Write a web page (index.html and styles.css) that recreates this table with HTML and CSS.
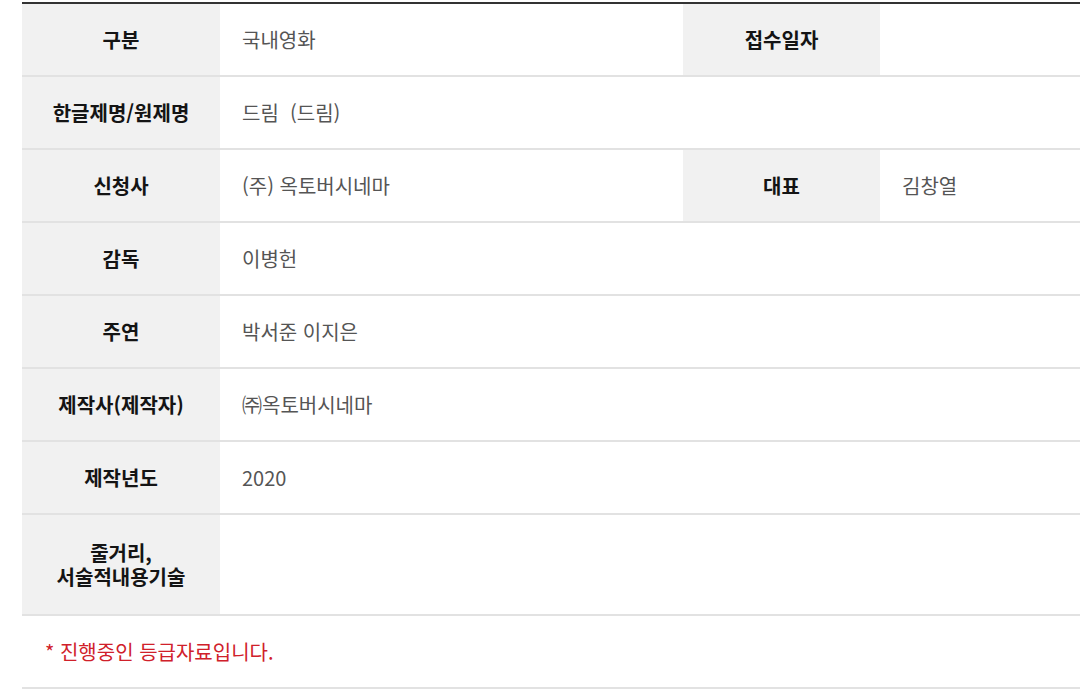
FILE: index.html
```html
<!DOCTYPE html>
<html lang="ko">
<head>
<meta charset="utf-8">
<link rel="stylesheet" href="styles.css">
</head>
<body>
<div class="page">
  <div class="info">
    <div class="row">
      <div class="label">구분</div>
      <div class="value">국내영화</div>
      <div class="label">접수일자</div>
      <div class="value"></div>
    </div>
    <div class="row">
      <div class="label">한글제명/원제명</div>
      <div class="value wide">드림&nbsp;&nbsp;(드림)</div>
    </div>
    <div class="row">
      <div class="label">신청사</div>
      <div class="value">(주) 옥토버시네마</div>
      <div class="label">대표</div>
      <div class="value">김창열</div>
    </div>
    <div class="row">
      <div class="label">감독</div>
      <div class="value wide">이병헌</div>
    </div>
    <div class="row">
      <div class="label">주연</div>
      <div class="value wide">박서준 이지은</div>
    </div>
    <div class="row">
      <div class="label">제작사(제작자)</div>
      <div class="value wide">㈜옥토버시네마</div>
    </div>
    <div class="row">
      <div class="label">제작년도</div>
      <div class="value wide">2020</div>
    </div>
    <div class="row tall">
      <div class="label multi"><span>줄거리,</span><span>서술적내용기술</span></div>
      <div class="value wide"></div>
    </div>
  </div>
  <div class="note">* 진행중인 등급자료입니다.</div>
</div>
</body>
</html>
```

FILE: styles.css
```css
html, body {
  margin: 0;
  padding: 0;
  background: #fff;
  font-family: "Noto Sans CJK KR", "Noto Sans", sans-serif;
}
.page {
  padding: 2px 0 0 22px;
  width: 1058px;
}
.info {
  border-top: 2px solid #333;
}
.row {
  display: grid;
  grid-template-columns: 198px 463px 197px 200px;
  height: 71px;
  border-bottom: 2px solid #e2e2e2;
}
.row.tall {
  height: 99px;
}
.label {
  background: #f1f1f1;
  display: flex;
  align-items: center;
  justify-content: center;
  text-align: center;
  font-size: 20px;
  font-weight: 700;
  color: #141414;
  line-height: 24px;
}
.label.multi {
  flex-direction: column;
}
.value {
  display: flex;
  align-items: center;
  padding-left: 22px;
  font-size: 20px;
  font-weight: 400;
  color: #555;
}
.value.wide {
  grid-column: span 3;
}
.note {
  height: 71px;
  display: flex;
  align-items: center;
  padding-left: 23px;
  font-size: 20px;
  color: #d0202a;
  border-bottom: 2px solid #e2e2e2;
}
```
